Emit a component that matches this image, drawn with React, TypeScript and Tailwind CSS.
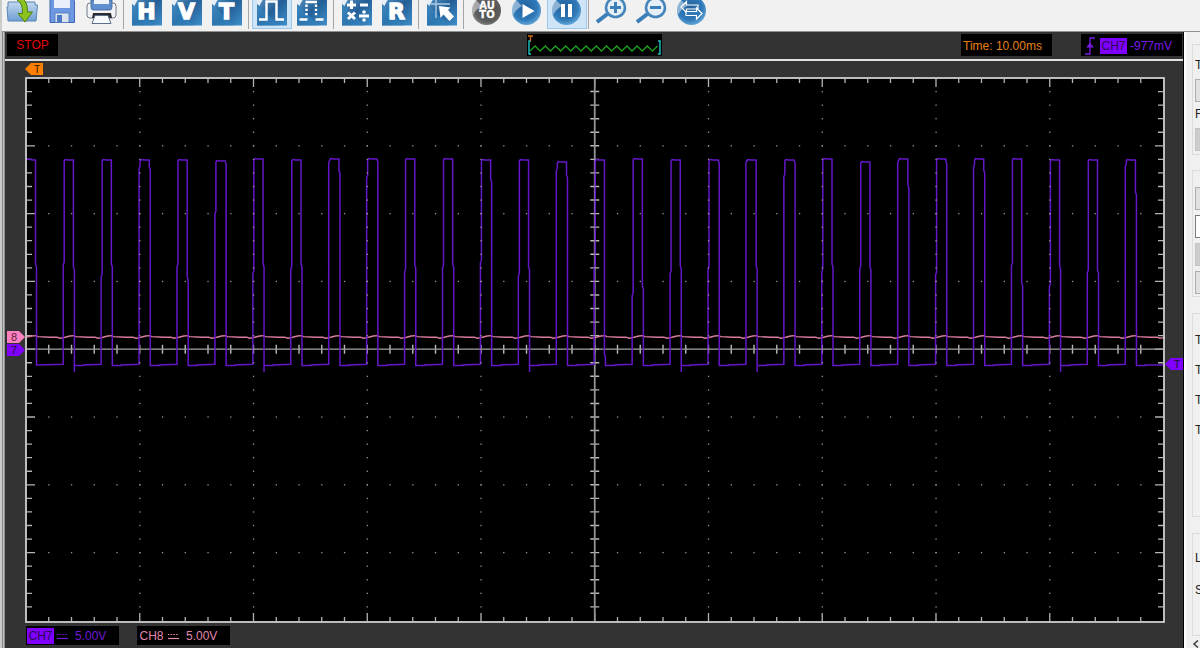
import React from 'react';
import clsx from 'clsx';

type Pulse = {
  top: number;
  riseBreak: number;
  fallBreak: number;
  dip?: boolean;
};

const PLOT_W = 1140;
const PLOT_H = 546;
const DIV_X = 113.75;
const DIV_Y = 67.8;
const MID_X = 1 + DIV_X * 5;
const MID_Y = 1 + DIV_Y * 4;

const PERIOD = 37.93;
const LOW_Y = 288;

const pulses: Pulse[] = [
  { top: 83, riseBreak: 188, fallBreak: 190, dip: true },
  { top: 83, riseBreak: 200, fallBreak: 187 },
  { top: 83, riseBreak: 92, fallBreak: 90 },
  { top: 83, riseBreak: 190, fallBreak: 200 },
  { top: 84, riseBreak: 137, fallBreak: 84 },
  { top: 82, riseBreak: 197, fallBreak: 187, dip: true },
  { top: 83, riseBreak: 192, fallBreak: 187 },
  { top: 82, riseBreak: 86, fallBreak: 93 },
  { top: 82, riseBreak: 101, fallBreak: 82 },
  { top: 82, riseBreak: 195, fallBreak: 188 },
  { top: 82, riseBreak: 191, fallBreak: 187 },
  { top: 83, riseBreak: 186, fallBreak: 102 },
  { top: 83, riseBreak: 199, fallBreak: 190, dip: true },
  { top: 85, riseBreak: 94, fallBreak: 98 },
  { top: 83, riseBreak: 190, fallBreak: 277 },
  { top: 82, riseBreak: 219, fallBreak: 209 },
  { top: 83, riseBreak: 197, fallBreak: 189, dip: true },
  { top: 83, riseBreak: 192, fallBreak: 83 },
  { top: 83, riseBreak: 86, fallBreak: 189, dip: true },
  { top: 83, riseBreak: 100, fallBreak: 83 },
  { top: 82, riseBreak: 195, fallBreak: 187 },
  { top: 85, riseBreak: 192, fallBreak: 190 },
  { top: 82, riseBreak: 86, fallBreak: 108 },
  { top: 82, riseBreak: 198, fallBreak: 84 },
  { top: 82, riseBreak: 91, fallBreak: 93 },
  { top: 82, riseBreak: 189, fallBreak: 206 },
  { top: 83, riseBreak: 210, fallBreak: 189, dip: true },
  { top: 83, riseBreak: 196, fallBreak: 193 },
  { top: 83, riseBreak: 90, fallBreak: 115 },
];

const range = (n: number) => Array.from({ length: n }, (_, i) => i);

// CH7: square wave, starts in the high state
function squarePath() {
  const parts = [`M2 82 L8 83 L10.5 83 V187 L11.5 190 V${LOW_Y}`];
  pulses.forEach((p, k) => {
    const rise = 38.2 + PERIOD * k;
    const fall = rise + 11.2;
    parts.push(`L${rise} ${LOW_Y - 0.8} V${p.riseBreak} L${rise + 1} ${p.riseBreak - 3} V${p.top + 1}`);
    parts.push(`L${rise + 2} ${p.top - 0.5} L${rise + 5} ${p.top} H${fall - 1}`);
    parts.push(`V${p.fallBreak} L${fall} ${p.fallBreak + 3} V${p.dip ? LOW_Y + 7 : LOW_Y}`);
    parts.push(`V${LOW_Y + 0.6} h9 v-0.6`);
  });
  parts.push('H1138');
  return parts.join(' ');
}

// CH8: nearly flat line with a small ripple under every pulse
function ripplePath() {
  const parts = ['M2 260'];
  range(30).forEach((k) => {
    const x = 11 + PERIOD * k;
    parts.push(`L${x - 4} 259 L${x} 258.6 L${x + 2} 259.6 L${x + 14} 260.2 L${x + 21} 260.2 L${x + 24} 261.2 L${x + 28} 260.6 L${x + 30} 260`);
  });
  return parts.join(' ');
}

const gridCols = range(51).slice(1, 50);
const gridRows = range(41).slice(1, 40);

function Dots() {
  return (
    <g fill="#949494">
      {range(10).slice(1).map((c) =>
        gridRows.map((j) => (
          <rect key={`${c}-${j}`} x={DIV_X * c + 0.4} y={0.4 + (DIV_Y / 5) * j} width="1.3" height="1.3" />
        ))
      )}
      {range(8).slice(1).map((r) =>
        gridCols.map((i) => (
          <rect key={`${r}-${i}`} x={(DIV_X / 5) * i + 0.4} y={0.4 + DIV_Y * r} width="1.3" height="1.3" />
        ))
      )}
    </g>
  );
}

function Graticule() {
  const edge: string[] = [];
  const axis: string[] = [];

  gridCols.forEach((i) => {
    const x = 1 + (DIV_X / 5) * i;
    const len = i % 5 === 0 ? 8 : 4;
    edge.push(`M${x} 2 v${len} M${x} ${PLOT_H - 2} v${-len}`);
    axis.push(`M${x} ${MID_Y - 4.5} v9`);
  });
  gridRows.forEach((j) => {
    const y = 1 + (DIV_Y / 5) * j;
    const len = j % 5 === 0 ? 8 : 5;
    edge.push(`M2 ${y} h${len} M${PLOT_W - 2} ${y} h${-len}`);
    axis.push(`M${MID_X - 4.5} ${y} h9`);
  });

  return (
    <g fill="none">
      <path d={edge.join(' ')} stroke="#b4b4b4" strokeWidth="1.3" />
      <path d={axis.join(' ')} stroke="#b8b8b8" strokeWidth="1.4" />
      <path d={`M2 ${MID_Y} H${PLOT_W - 2}`} stroke="#a4a4a4" strokeWidth="1.3" />
      <path d={`M${MID_X} 2 V${PLOT_H - 2}`} stroke="#949494" strokeWidth="1.8" />
    </g>
  );
}

function Plot() {
  return (
    <svg viewBox={`0 0 ${PLOT_W} ${PLOT_H}`} className="block h-auto w-full bg-black" role="img" aria-label="Waveform">
      <Graticule />
      <path d={ripplePath()} fill="none" stroke="#d97ca2" strokeWidth="1.4" />
      <path d={squarePath()} fill="none" stroke="#6416c8" strokeWidth="1.5" />
      <Dots />
      <rect x="1" y="1" width={PLOT_W - 2} height={PLOT_H - 2} fill="none" stroke="#d2d2d2" strokeWidth="1.8" />
    </svg>
  );
}

type TagProps = { label: string; color: string; side: 'left' | 'right'; ink?: string };

function Tag({ label, color, side, ink = '#1c1030' }: TagProps) {
  const points = side === 'left' ? '0,6 6,0 18,0 18,12 6,12' : '0,0 12,0 18,6 12,12 0,12';
  return (
    <svg viewBox="0 0 18 12" className="block h-3 w-[18px]">
      <polygon points={points} fill={color} />
      <text x={side === 'left' ? 12 : 7} y="10" textAnchor="middle" fontSize="11" fill={ink} fontFamily="Liberation Sans, sans-serif">
        {label}
      </text>
    </svg>
  );
}

function Icon({ children }: { children: React.ReactNode }) {
  return (
    <svg viewBox="0 0 32 32" className="size-8 shrink-0" aria-hidden="true">
      {children}
    </svg>
  );
}

function Tile({ children }: { children?: React.ReactNode }) {
  return (
    <Icon>
      <rect x="1" y="1" width="30" height="29.5" fill="url(#tileBlue)" />
      <path d="M1 1 H10 Q6 5 3.5 11 L1 9Z" fill="#e6eef5" />
      <path d="M1 9 L23 30.5 H1Z" fill="#3385c2" opacity="0.6" />
      {children}
    </Icon>
  );
}

function LetterTile({ letter }: { letter: string }) {
  return (
    <Tile>
      <text x="15.5" y="23.5" textAnchor="middle" fontSize="22" fontWeight="700" fill="#fff" stroke="#fff" strokeWidth="1.4" fontFamily="DejaVu Sans, sans-serif">
        {letter}
      </text>
    </Tile>
  );
}

function Disc({ gray, children }: { gray?: boolean; children: React.ReactNode }) {
  return (
    <Icon>
      <circle cx="15.5" cy="15.5" r="14.5" fill={gray ? 'url(#discGray)' : 'url(#discBlue)'} />
      <path d="M2 20 A14.5 14.5 0 0 1 5 5 L11 11 Q5 14 2 20Z" fill="#fff" opacity="0.45" />
      {children}
    </Icon>
  );
}

function Defs() {
  return (
    <svg className="absolute size-0" aria-hidden="true">
      <defs>
        <linearGradient id="tileBlue" x1="0" y1="0" x2="1" y2="1">
          <stop offset="0" stopColor="#5c97c6" />
          <stop offset="0.5" stopColor="#245f96" />
          <stop offset="1" stopColor="#3f8fcb" />
        </linearGradient>
        <radialGradient id="discBlue" cx="0.45" cy="0.4" r="0.6">
          <stop offset="0" stopColor="#22609c" />
          <stop offset="0.7" stopColor="#3079b8" />
          <stop offset="1" stopColor="#5fa3d6" />
        </radialGradient>
        <radialGradient id="discGray" cx="0.55" cy="0.45" r="0.6">
          <stop offset="0" stopColor="#4a4a4a" />
          <stop offset="0.75" stopColor="#5f5f5f" />
          <stop offset="1" stopColor="#8c8c8c" />
        </radialGradient>
        <linearGradient id="folderBlue" x1="0" y1="0" x2="0" y2="1">
          <stop offset="0" stopColor="#c4d9ee" />
          <stop offset="1" stopColor="#6d9fd4" />
        </linearGradient>
      </defs>
    </svg>
  );
}

const OpenIcon = () => (
  <Icon>
    <path d="M2 7 H29 V10 H31.5 L30 26 H2 L1 12 H2Z" fill="url(#folderBlue)" stroke="#5b86b5" strokeWidth="1" />
    <path d="M11 1 Q22 3 21.5 17 H26.5 L19 27 L12 18.5 H16.5 Q17 8 11 5Z" fill="#8cc21f" stroke="#4f7f12" strokeWidth="1" />
  </Icon>
);

const SaveIcon = () => (
  <Icon>
    <path d="M4 3 H26 L28.5 6 V27.5 H4Z" fill="#6d97e0" stroke="#3f68b5" strokeWidth="1" />
    <path d="M8 1 H24 V13 H8Z" fill="#e9f0fb" />
    <path d="M9 18 H23 V27.5 H9Z" fill="#dbe3ee" stroke="#4b73bd" strokeWidth="0.8" />
    <rect x="11" y="20" width="5" height="7.5" fill="#4e79c6" />
  </Icon>
);

const PrintIcon = () => (
  <Icon>
    <path d="M7 0 H24 V10 H7Z" fill="#e8eef6" stroke="#5b7fae" />
    <rect x="1" y="8" width="29" height="15" rx="3" fill="#f2f4f7" stroke="#707a88" strokeWidth="1" />
    <path d="M5 5 H26 V12 Q26 15 24 15 H7 Q5 15 5 12Z" fill="#5f8fce" stroke="#3c6396" strokeWidth="0.8" />
    <path d="M8 2 H23 V9 H8Z" fill="#eef3f9" />
    <path d="M7 18 H25 L26 23 H6Z" fill="#2b2b30" />
    <path d="M9 20.5 H22 L25 28.5 H6Z" fill="#f7fafd" stroke="#5a6f8c" strokeWidth="1" />
  </Icon>
);

const PulseIcon = () => (
  <Tile>
    <path d="M3 24.5 H10.5 V6.5 H20.5 V24.5 H28" fill="none" stroke="#fff" strokeWidth="2.4" />
  </Tile>
);

const DashedPulseIcon = () => (
  <Tile>
    <path d="M3.5 24.5 H11.5 M19.5 24.5 H27.5 M9.5 7 H21" fill="none" stroke="#fff" strokeWidth="2.4" />
    <path d="M10.5 9.5 V22 M20 9.5 V22" fill="none" stroke="#fff" strokeWidth="2.4" strokeDasharray="2.4 1.8" />
  </Tile>
);

const MathIcon = () => (
  <Tile>
    <path d="M6 10 H15 M10.5 5.5 V14 M19 10 H27" stroke="#fff" strokeWidth="3" />
    <path d="M7 17.5 L14 24 M14 17.5 L7 24 M18 21 H28" stroke="#fff" strokeWidth="3" />
    <circle cx="23" cy="17" r="1.8" fill="#fff" />
    <circle cx="23" cy="25" r="1.8" fill="#fff" />
  </Tile>
);

const CursorIcon = () => (
  <Tile>
    <path d="M5 9 H24 M10 4 V23" stroke="#a9cbe6" strokeWidth="1.4" fill="none" />
    <path d="M13 11 L24.5 12.5 L22 15 L28 21.5 L23.5 26 L17.5 19.5 L14.5 23Z" fill="#fff" />
  </Tile>
);

const AutoIcon = () => (
  <Disc gray>
    <g fontFamily="DejaVu Sans, sans-serif" fontWeight="700" fontSize="10" fill="#fff" stroke="#fff" strokeWidth="0.3" textAnchor="middle">
      <text x="16" y="14">AU</text>
      <text x="16" y="23">TO</text>
    </g>
  </Disc>
);

const PlayIcon = () => (
  <Disc>
    <path d="M11.5 9 L23.5 16 L11.5 23Z" fill="#fff" />
  </Disc>
);

const PauseIcon = () => (
  <Disc>
    <path d="M10 9 H14 V22 H10Z M17 9 H21 V22 H17Z" fill="#fff" />
  </Disc>
);

const ZoomIcon = ({ plus }: { plus?: boolean }) => (
  <Icon>
    <path d="M12 18.5 L1 27" stroke="#3a7db8" strokeWidth="4" />
    <circle cx="19.5" cy="12.5" r="9.5" fill="#e6eef6" stroke="#4685bb" strokeWidth="2.6" />
    <path d={plus ? 'M14 12.5 H25 M19.5 7 V18' : 'M14 12.5 H25'} stroke="#3a7db8" strokeWidth="3" />
  </Icon>
);

const SwapIcon = () => (
  <Disc>
    <path d="M5 12 L10.5 6.5 V10 H22 V14 H10.5 V17.5Z" fill="none" stroke="#fff" strokeWidth="1.2" />
    <path d="M26 18.5 L20.5 13 V16.5 H10 V20.5 H20.5 V24Z" fill="#3079b8" stroke="#fff" strokeWidth="1.2" />
  </Disc>
);

type Tool = { name: string; icon: React.ReactNode; active?: boolean };

const toolGroups: Tool[][] = [
  [
    { name: 'Open', icon: <OpenIcon /> },
    { name: 'Save', icon: <SaveIcon /> },
    { name: 'Print', icon: <PrintIcon /> },
  ],
  [
    { name: 'Horizontal', icon: <LetterTile letter="H" /> },
    { name: 'Vertical', icon: <LetterTile letter="V" /> },
    { name: 'Trigger', icon: <LetterTile letter="T" /> },
  ],
  [
    { name: 'Line display', icon: <PulseIcon />, active: true },
    { name: 'Dot display', icon: <DashedPulseIcon /> },
  ],
  [
    { name: 'Math', icon: <MathIcon /> },
    { name: 'Reference', icon: <LetterTile letter="R" /> },
  ],
  [{ name: 'Cursor', icon: <CursorIcon /> }],
  [
    { name: 'Auto set', icon: <AutoIcon /> },
    { name: 'Run', icon: <PlayIcon /> },
    { name: 'Pause', icon: <PauseIcon />, active: true },
  ],
  [
    { name: 'Zoom in', icon: <ZoomIcon plus /> },
    { name: 'Zoom out', icon: <ZoomIcon /> },
    { name: 'Swap', icon: <SwapIcon /> },
  ],
];

function Toolbar() {
  return (
    <nav className="flex h-8 items-end overflow-hidden border-b border-[#8f8f8f] bg-[#f1f1f1] pb-0.5">
      {toolGroups.map((group, i) => (
        <React.Fragment key={i}>
          {i > 0 && <span className="mr-[3px] ml-px h-9 w-px shrink-0 bg-[#a5a5a5]" />}
          {group.map((tool) => (
            <button
              key={tool.name}
              type="button"
              title={tool.name}
              aria-label={tool.name}
              className={clsx(
                'flex h-9 w-10 shrink-0 items-center justify-center border',
                tool.active ? 'border-[#9cc8ec] bg-[#cfe4f6]' : 'border-transparent'
              )}
            >
              {tool.icon}
            </button>
          ))}
        </React.Fragment>
      ))}
    </nav>
  );
}

function Preview() {
  const zigzag = range(26).map((i) => `${3 + i * 5.1},${i % 2 ? 12 : 17}`).join(' ');
  return (
    <div className="h-[22px] w-[135px] bg-black">
      <svg viewBox="0 0 135 22" className="block h-full w-full" aria-hidden="true">
        <polyline points={zigzag} fill="none" stroke="#1fa01f" strokeWidth="1.3" />
        <path d="M4 7 H2 V20 H4 M131 7 H133 V20 H131" fill="none" stroke="#1fc8c8" strokeWidth="1.4" />
        <path d="M1 2 H6 M3.5 2 V7" stroke="#d06a10" strokeWidth="1.3" />
      </svg>
    </div>
  );
}

function StatusBar() {
  return (
    <div className="grid grid-cols-[1fr_auto_1fr] border-b-2 border-[#e2e2e2] pt-0.5 pr-px pb-[3px] pl-0.5">
      <div className="flex h-[22px] w-[51px] items-center justify-center bg-black text-[#e00808]">STOP</div>
      <Preview />
      <div className="flex justify-end gap-[29px]">
        <div className="flex h-[22px] w-[91px] items-center bg-black pt-0.5 pl-0.5 text-[#e58018]">Time: 10.00ms</div>
        <div className="flex h-[22px] w-[101px] items-center gap-[3px] bg-black pt-0.5 pl-1 text-[#7a1ae6]">
          <svg viewBox="0 0 12 18" className="h-[18px] w-3" aria-hidden="true">
            <path d="M0 17 H5 V1 H10" fill="none" stroke="currentColor" strokeWidth="1.3" />
            <path d="M5 6 L9 10.5 H1Z" fill="currentColor" />
          </svg>
          <span className="w-[27px] bg-[#8000ff] text-center text-[#2b0a55]">CH7</span>
          <span>-977mV</span>
        </div>
      </div>
    </div>
  );
}

function ChannelBox({ name, scale, selected }: { name: string; scale: string; selected?: boolean }) {
  return (
    <div className={clsx('flex h-[19px] w-[93px] items-center bg-black pl-px', selected ? 'text-[#7018d6]' : 'text-[#e088ac]')}>
      <span className={clsx('w-[27px] text-center', selected && 'bg-[#8000ff] text-[#2b0a55]')}>{name}</span>
      <svg viewBox="0 0 12 8" className="ml-0.5 h-2 w-3" aria-label="DC coupling" role="img">
        <path d="M1 2.5 H12" stroke="currentColor" strokeWidth="1.2" strokeDasharray="1.5 1.2" />
        <path d="M1 6.5 H12" stroke="currentColor" strokeWidth="1.2" />
      </svg>
      <span className="ml-[7px]">{scale}</span>
    </div>
  );
}

function Scope() {
  return (
    <main className="min-w-0 flex-1 bg-[#333333] text-[12px] leading-4">
      <StatusBar />
      <div className="flex h-4 items-center pl-5">
        <Tag label="T" color="#ff8000" side="left" ink="#402000" />
      </div>
      <div className="flex">
        <div className="relative w-5 shrink-0">
          <div className="absolute top-[47.6%] left-0.5 -translate-y-1/2">
            <Tag label="8" color="#ff80c0" side="right" ink="#5a1c3c" />
          </div>
          <div className="absolute top-1/2 left-0.5 -translate-y-1/2">
            <Tag label="7" color="#8000ff" side="right" />
          </div>
        </div>
        <div className="min-w-0 flex-1">
          <Plot />
        </div>
        <div className="relative w-[18px] shrink-0">
          <div className="absolute top-[52.5%] left-0 -translate-y-1/2">
            <Tag label="T" color="#8000ff" side="left" />
          </div>
        </div>
      </div>
      <div className="flex gap-[18px] pt-[3px] pb-[3px] pl-[21px]">
        <ChannelBox name="CH7" scale="5.00V" selected />
        <ChannelBox name="CH8" scale="5.00V" />
      </div>
    </main>
  );
}

const Group = ({ className, children }: { className: string; children: React.ReactNode }) => (
  <section className={clsx('flex w-40 flex-col border border-[#dcdcdc] pl-0.5', className)}>{children}</section>
);

const Field = ({ className }: { className: string }) => (
  <button type="button" aria-label="Setting" className={clsx('h-[23px] w-32 shrink-0 border', className)} />
);

// Settings panel, mostly pushed past the window edge
function SidePanel() {
  return (
    <aside className="w-[17px] shrink-0 overflow-hidden border-l border-black bg-[#f0f0f0] text-[12px] leading-4 text-[#222]">
      <div className="h-full border-l-2 border-white pt-3 pl-1.5">
        <Group className="h-[111px] pt-3">
          <span>T</span>
          <Field className="mt-1.5 border-[#adadad] bg-[#e1e1e1]" />
          <span className="mt-1">F</span>
          <Field className="mt-1.5 border-[#c4c4c4] bg-[#cccccc]" />
        </Group>
        <Group className="mt-[15px] h-[127px] gap-[5px] pt-4">
          <Field className="border-[#adadad] bg-[#e1e1e1]" />
          <Field className="border-[#7a7a7a] bg-white" />
          <Field className="border-[#c4c4c4] bg-[#cccccc]" />
          <Field className="border-[#adadad] bg-[#e1e1e1]" />
        </Group>
        <Group className="mt-4 h-[204px] gap-3.5 pt-[18px]">
          <span>T</span>
          <span>T</span>
          <span>T</span>
          <span>T</span>
        </Group>
        <Group className="mt-4 h-[103px] gap-4 pt-4">
          <span>L</span>
          <span>S</span>
        </Group>
        <svg viewBox="0 0 8 8" className="mt-1 size-2" aria-hidden="true">
          <path d="M6 0.5 L2 4 L6 7.5" fill="none" stroke="#444" strokeWidth="1.6" />
        </svg>
      </div>
    </aside>
  );
}

export default function App() {
  return (
    <div className="flex min-h-screen bg-[#f0f0f0] font-['Liberation_Sans',Arial,sans-serif]">
      <Defs />
      <div className="w-0.5 shrink-0 bg-[#c9cdca]" />
      <div className="flex min-w-0 flex-1 flex-col">
        <Toolbar />
        <div className="flex flex-1">
          <div className="w-[3px] shrink-0 border-x border-l-[#858585] border-r-[#909090] bg-[#c4c4c4]" />
          <Scope />
          <SidePanel />
        </div>
      </div>
    </div>
  );
}
